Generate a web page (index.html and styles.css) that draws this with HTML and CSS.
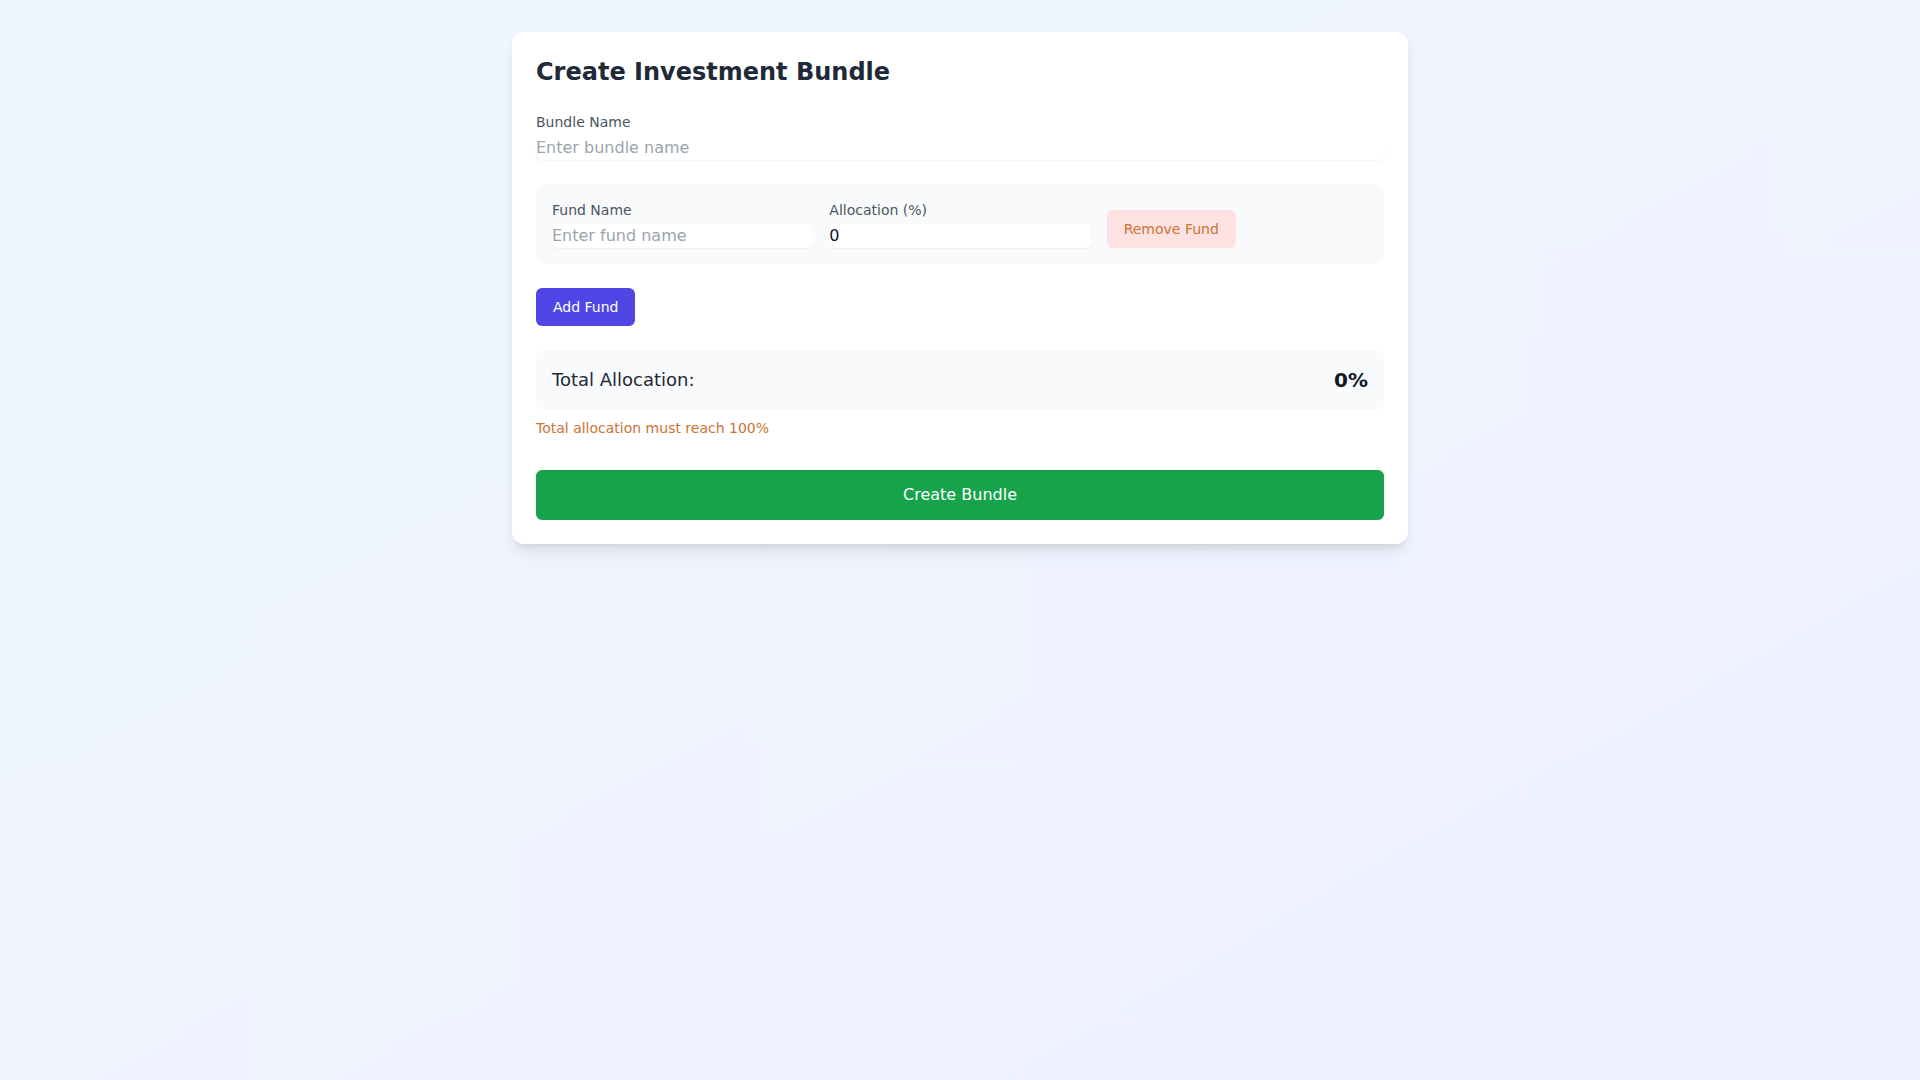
FILE: index.html
```html
<!DOCTYPE html>
<html lang="en">
<head>
<meta charset="utf-8">
<title>Create Investment Bundle</title>
<link rel="stylesheet" href="styles.css">
</head>
<body>
<main class="page">
  <section class="card">
    <h1 class="title">Create Investment Bundle</h1>
    <div class="field field-bundle">
      <label class="label">Bundle Name</label>
      <input class="input" type="text" placeholder="Enter bundle name">
    </div>
    <div class="fund-row">
      <div class="field">
        <label class="label">Fund Name</label>
        <input class="input" type="text" placeholder="Enter fund name">
      </div>
      <div class="field">
        <label class="label">Allocation (%)</label>
        <input class="input" type="text" value="0">
      </div>
      <div class="fund-action">
        <button class="btn btn-remove" type="button">Remove Fund</button>
      </div>
    </div>
    <button class="btn btn-add" type="button">Add Fund</button>
    <div class="total">
      <span class="total-label">Total Allocation:</span>
      <span class="total-value">0%</span>
    </div>
    <p class="warning">Total allocation must reach 100%</p>
    <button class="btn btn-create" type="button">Create Bundle</button>
  </section>
</main>
</body>
</html>
```

FILE: styles.css
```css
* { box-sizing: border-box; }
html, body { margin: 0; padding: 0; }
body {
  min-height: 100vh;
  font-family: "DejaVu Sans", sans-serif;
  background: linear-gradient(to bottom right, #eff6ff, #eef2ff);
  color: #1f2937;
}
.page {
  padding: 32px 0;
  display: flex;
  justify-content: center;
}
.card {
  width: 896px;
  background: #ffffff;
  border-radius: 12px;
  padding: 24px;
  box-shadow: 0 10px 15px -3px rgba(0,0,0,0.1), 0 4px 6px -4px rgba(0,0,0,0.1);
}
.title {
  margin: 0 0 24px 0;
  font-size: 24px;
  line-height: 32px;
  font-weight: 700;
  color: #1f2937;
}
.field { display: flex; flex-direction: column; }
.field-bundle { margin-bottom: 24px; }
.label {
  font-size: 14px;
  line-height: 20px;
  color: #4b5563;
}
.input {
  margin-top: 4px;
  width: 100%;
  height: 24px;
  border: 0;
  padding: 0;
  border-radius: 6px;
  background: #ffffff;
  font-family: "DejaVu Sans", sans-serif;
  font-size: 16px;
  line-height: 24px;
  color: #111827;
  box-shadow: 0 1px 2px 0 rgba(0,0,0,0.05);
  outline: none;
}
.input::placeholder { color: #9ca3af; }
.fund-row {
  display: grid;
  grid-template-columns: repeat(3, 1fr);
  gap: 16px;
  background: #f9fafb;
  border-radius: 8px;
  padding: 16px;
  margin-bottom: 24px;
}
.fund-action { display: flex; align-items: flex-end; }
.btn {
  font-family: "DejaVu Sans", sans-serif;
  border: 1px solid transparent;
  border-radius: 6px;
  cursor: pointer;
}
.btn-remove {
  background: #fee2e2;
  color: #cc7433;
  font-size: 14px;
  line-height: 20px;
  padding: 8px 16px;
}
.btn-add {
  display: block;
  background: #4f46e5;
  color: #ffffff;
  font-size: 14px;
  line-height: 20px;
  padding: 8px 16px;
  margin-bottom: 24px;
}
.total {
  display: flex;
  justify-content: space-between;
  align-items: center;
  background: #f9fafb;
  border-radius: 8px;
  padding: 16px;
  font-size: 18px;
  line-height: 28px;
}
.total-label { font-weight: 500; color: #1f2937; }
.total-value { font-size: 20px; font-weight: 700; color: #111827; }
.warning {
  margin: 8px 0 0 0;
  font-size: 14px;
  line-height: 20px;
  color: #cc7433;
}
.btn-create {
  display: block;
  width: 100%;
  margin-top: 32px;
  background: #16a34a;
  color: #ffffff;
  font-size: 16px;
  line-height: 24px;
  padding: 12px 16px;
  border-radius: 6px;
}
```
